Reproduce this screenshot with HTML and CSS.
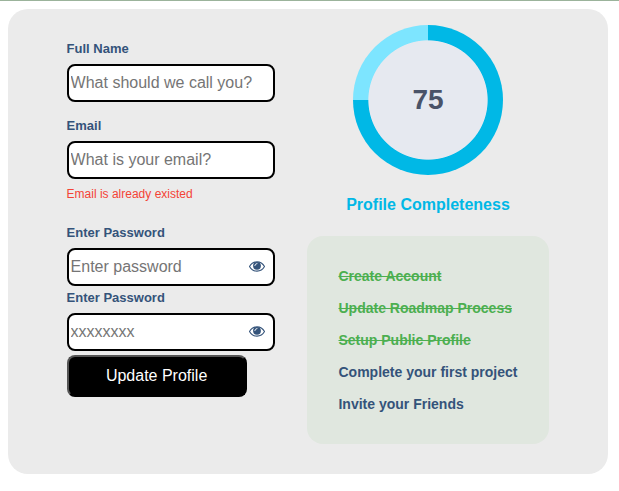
FILE: index.html
```html
<!DOCTYPE html>
<html lang="en">
<head>
<meta charset="utf-8">
<title>Update Profile</title>
<link rel="stylesheet" href="styles.css">
</head>
<body>
<svg class="sprite" aria-hidden="true"><symbol id="eye" viewBox="0 0 16 16"><path d="M.5 8.5C4 2.3 12 2.3 15.5 8.5C12 14.7 4 14.7 .5 8.5Z" fill="#fff" stroke="currentColor" stroke-width="1.1"/><circle cx="8" cy="7.8" r="3.9" fill="currentColor"/><path d="M5.8 7.6Q6 5.7 8 5.5" fill="none" stroke="#fff" stroke-width=".9" stroke-linecap="round"/></symbol></svg>
<main class="card">
  <form class="form">
    <div class="field">
      <label for="name">Full Name</label>
      <input id="name" type="text" placeholder="What should we call you?">
    </div>
    <div class="field field-email">
      <label for="email">Email</label>
      <input id="email" type="email" placeholder="What is your email?">
      <p class="error">Email is already existed</p>
    </div>
    <div class="field field-password">
      <label for="password">Enter Password</label>
      <div class="secret">
        <input id="password" type="password" placeholder="Enter password">
        <svg class="eye"><use href="#eye"/></svg>
      </div>
    </div>
    <div class="field field-confirm">
      <label for="confirm">Enter Password</label>
      <div class="secret">
        <input id="confirm" type="password" placeholder="xxxxxxxx">
        <svg class="eye"><use href="#eye"/></svg>
      </div>
    </div>
    <button class="submit" type="button">Update Profile</button>
  </form>
  <section class="progress">
    <div class="ring">75</div>
    <h2>Profile Completeness</h2>
    <ul class="tasks">
      <li class="done">Create Account</li>
      <li class="done">Update Roadmap Process</li>
      <li class="done">Setup Public Profile</li>
      <li>Complete your first project</li>
      <li>Invite your Friends</li>
    </ul>
  </section>
</main>
</body>
</html>
```
FILE: styles.css
```css
* {
  box-sizing: border-box;
}

body {
  margin: 0;
  padding: 8px 8px 0;
  border-top: 1px solid #9bb39b;
  background: #fff;
  font-family: "Liberation Sans", Arial, sans-serif;
  color: #34537a;
  overflow: hidden;
}

.sprite {
  position: absolute;
  width: 0;
  height: 0;
}

.card {
  display: flex;
  align-items: flex-start;
  gap: 32.4px;
  width: 600px;
  height: 465px;
  padding: 16px 58.6px;
  border-radius: 20px;
  background: #ebebeb;
}

.form {
  width: 208px;
  flex: none;
  padding-top: 15px;
}

.field label {
  display: block;
  height: 24px;
  padding-top: 1px;
  font-size: 13px;
  font-weight: bold;
  line-height: 16px;
}

.field input {
  display: block;
  width: 208px;
  height: 38px;
  padding: 1px 2px;
  border: 2px solid #000;
  border-radius: 8px;
  background: #fff;
  font: 16px "Liberation Sans", Arial, sans-serif;
}

.field input::placeholder {
  color: #757575;
}

.field-email {
  margin-top: 15px;
}

.error {
  margin: 8px 0 0;
  font-size: 12px;
  line-height: 14px;
  color: #f44336;
}

.field-password {
  margin-top: 23px;
}

.field-confirm {
  margin-top: 3px;
}

.secret {
  position: relative;
}

.eye {
  position: absolute;
  top: 10px;
  right: 10px;
  width: 16px;
  height: 16px;
  color: #34537a;
}

.submit {
  display: block;
  width: 180px;
  height: 42px;
  margin-top: 4px;
  padding: 0;
  border: 2px outset #000;
  border-radius: 8px;
  background: #000;
  color: #fff;
  font: 16px "Liberation Sans", Arial, sans-serif;
}

.progress {
  display: flex;
  flex-direction: column;
  align-items: center;
  width: 242px;
  flex: none;
}

.ring {
  display: grid;
  place-items: center;
  width: 150px;
  height: 150px;
  border-radius: 50%;
  background:
    radial-gradient(closest-side, #e6e9f0 59.2px, transparent 60.1px),
    conic-gradient(#00b8e6 75%, #7de5ff 0);
  color: #4a5368;
  font-size: 28px;
  font-weight: bold;
}

.progress h2 {
  margin: 20px 0 22px;
  font-size: 16px;
  line-height: 19px;
  color: #00b8e6;
}

.tasks {
  width: 242px;
  height: 208px;
  margin: 0;
  padding: 24px 31.5px;
  border-radius: 16px;
  background: #e0e7df;
  list-style: none;
  font-size: 14px;
  font-weight: bold;
  line-height: 32px;
  white-space: nowrap;
}

.done {
  color: #4caf50;
  text-decoration: line-through;
}
```
